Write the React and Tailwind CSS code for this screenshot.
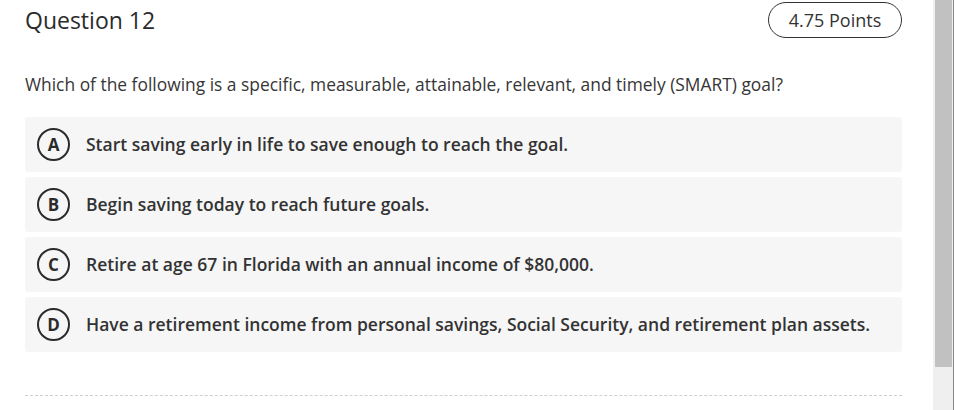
const OPTIONS = [
  { key: 'A', text: 'Start saving early in life to save enough to reach the goal.' },
  { key: 'B', text: 'Begin saving today to reach future goals.' },
  { key: 'C', text: 'Retire at age 67 in Florida with an annual income of $80,000.' },
  { key: 'D', text: 'Have a retirement income from personal savings, Social Security, and retirement plan assets.' },
];

const Option = ({ letter, text }) => (
  <div className="flex items-center h-[55px] rounded-[3px] bg-[#f6f6f6] pl-[12px]">
    <div className="size-[33px] shrink-0 rounded-full border-2 border-[#2b2b2b] flex items-center justify-center text-[17px] font-bold text-[#2b2b2b] leading-none">
      {letter}
    </div>
    <span className="ml-[16px] text-[17.5px] font-semibold text-[#333]">{text}</span>
  </div>
);

export default function App() {
  return (
    <div className="flex w-[954px] h-[410px] overflow-hidden bg-white font-['Open_Sans',sans-serif]">
      <div className="w-[933px] pl-[25px] pr-[31px]">
        <div className="flex items-center justify-between h-[40px]">
          <h1 className="text-[23px] text-[#2b2b2b]">Question 12</h1>
          <span className="w-[134px] h-[36px] rounded-full border border-[#333] flex items-center justify-center text-[18px] text-[#333]">
            4.75 Points
          </span>
        </div>
        <p className="mt-[32px] mb-[21px] text-[17.4px] leading-6 text-[#363636]">
          Which of the following is a specific, measurable, attainable, relevant, and timely (SMART) goal?
        </p>
        <div className="flex flex-col gap-[5px]">
          {OPTIONS.map((o) => (
            <Option key={o.key} letter={o.key} text={o.text} />
          ))}
        </div>
        <div className="mt-[43px] border-t border-dashed border-[#cfcfcf]" />
      </div>
      <div className="w-[21px] h-full bg-[#efefef] flex pl-[2px] border-r border-[#888]">
        <div className="w-[17px] h-[367px] bg-[#c1c1c1]" />
      </div>
    </div>
  );
}
